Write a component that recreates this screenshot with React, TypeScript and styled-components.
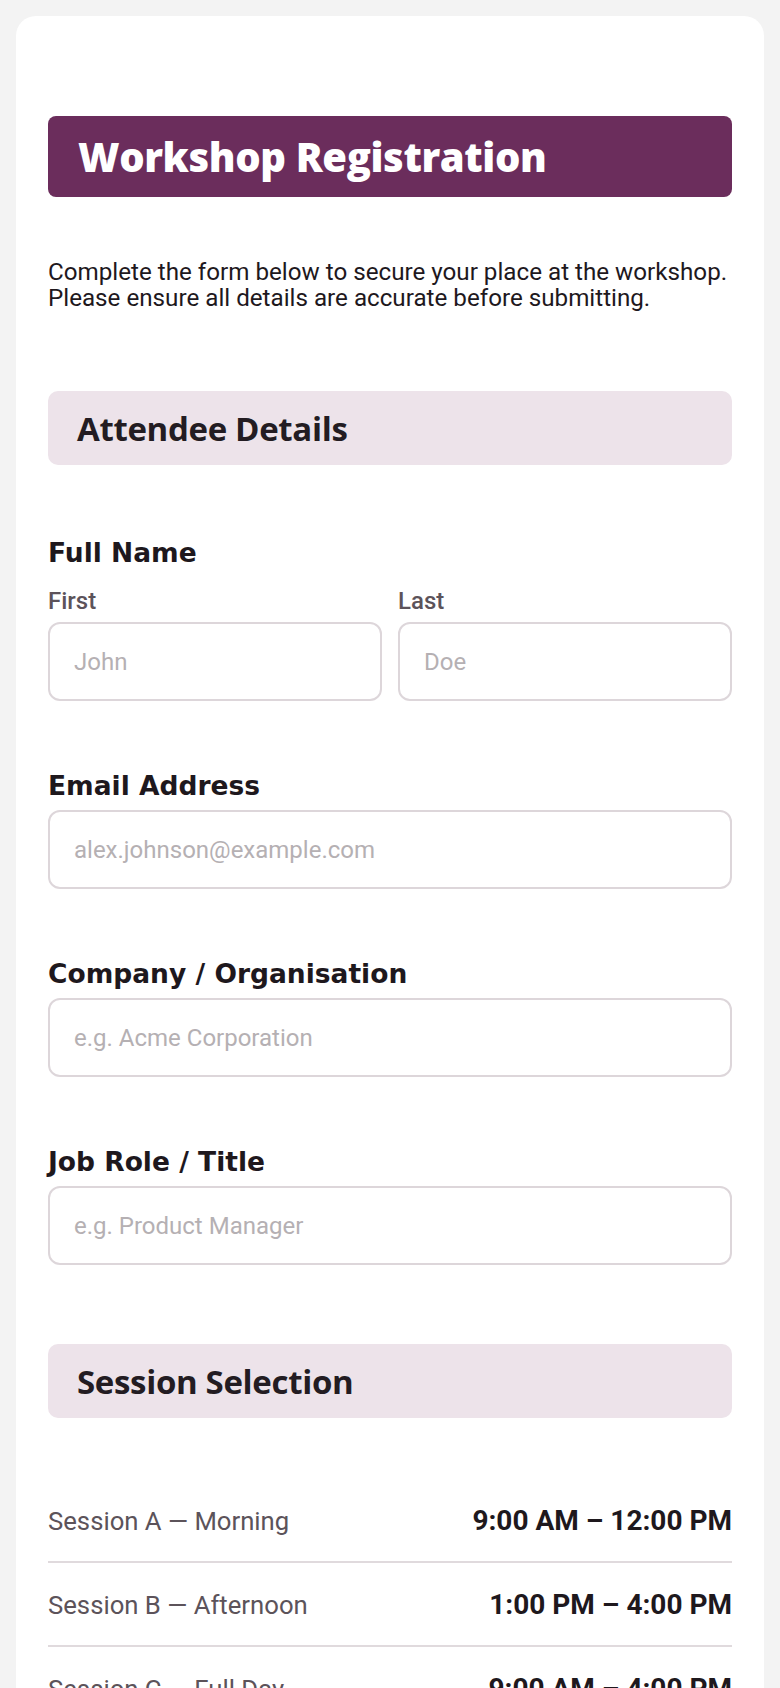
import React from 'react';
import styled, {createGlobalStyle} from "styled-components";

const GlobalStyle = createGlobalStyle`
  * {
    box-sizing: border-box;
  }

  body {
    margin: 0;
    background: #f3f3f3;
    font-family: Roboto, "Liberation Sans", sans-serif;
    color: #1e181d;
  }
`

const sessions = [
    {name: "Session A — Morning", time: "9:00 AM – 12:00 PM"},
    {name: "Session B — Afternoon", time: "1:00 PM – 4:00 PM"},
    {name: "Session C — Full Day", time: "9:00 AM – 4:00 PM"},
];

export default function App() {
    return (
        <>
            <GlobalStyle/>
            <Page>
                <Card>
                    <TitleBar>
                        <Title>Workshop Registration</Title>
                    </TitleBar>
                    <Intro>
                        Complete the form below to secure your place at the workshop.
                        Please ensure all details are accurate before submitting.
                    </Intro>

                    <SectionBar>
                        <SectionTitle>Attendee Details</SectionTitle>
                    </SectionBar>

                    <Field $first>
                        <Label>Full Name</Label>
                        <NameGrid>
                            <div>
                                <SubLabel>First</SubLabel>
                                <Input placeholder="John"/>
                            </div>
                            <div>
                                <SubLabel>Last</SubLabel>
                                <Input placeholder="Doe"/>
                            </div>
                        </NameGrid>
                    </Field>

                    <Field>
                        <Label>Email Address</Label>
                        <Input type="email" placeholder="alex.johnson@example.com"/>
                    </Field>

                    <Field>
                        <Label>Company / Organisation</Label>
                        <Input placeholder="e.g. Acme Corporation"/>
                    </Field>

                    <Field>
                        <Label>Job Role / Title</Label>
                        <Input placeholder="e.g. Product Manager"/>
                    </Field>

                    <SectionBar $spaced>
                        <SectionTitle>Session Selection</SectionTitle>
                    </SectionBar>

                    <SessionList>
                        {sessions.map(s => (
                            <SessionRow key={s.name}>
                                <SessionName>{s.name}</SessionName>
                                <SessionTime>{s.time}</SessionTime>
                            </SessionRow>
                        ))}
                    </SessionList>
                </Card>
            </Page>
        </>
    );
}

const Page = styled.div`
  padding: 16px;
`

const Card = styled.main`
  background: #ffffff;
  border-radius: 20px;
  padding: 100px 32px 48px;
`

const TitleBar = styled.header`
  display: flex;
  align-items: center;
  height: 81px;
  padding: 0 30px;
  background: #6b2d5c;
  border-radius: 8px;
`

const Title = styled.h1`
  margin: 0;
  color: #ffffff;
  font-family: "Open Sans", Inter, sans-serif;
  font-size: 40px;
  font-weight: 800;
  letter-spacing: -0.01em;
  line-height: 1;
`

const Intro = styled.p`
  margin: 62px 0 0;
  font-size: 24.2px;
  line-height: 26px;
  color: #1e181d;
`

const SectionBar = styled.div<{ $spaced?: boolean }>`
  display: flex;
  align-items: center;
  height: 74px;
  margin-top: ${p => p.$spaced ? "79px" : "80px"};
  padding: 0 29px;
  background: #ede3ea;
  border-radius: 10px;
`

const SectionTitle = styled.h2`
  margin: 0;
  color: #231c22;
  font-family: "Open Sans", Inter, sans-serif;
  font-size: 33px;
  font-weight: 700;
  letter-spacing: -0.01em;
  line-height: 1;
`

const Field = styled.div<{ $first?: boolean }>`
  display: flex;
  flex-direction: column;
  margin-top: ${p => p.$first ? "72px" : "69px"};
`

const Label = styled.label`
  font-family: "DejaVu Sans", sans-serif;
  font-size: 26.5px;
  font-weight: 700;
  line-height: 32px;
  color: #1e181d;
  margin-bottom: 8px;

  &:has(+ div) {
    margin-bottom: 19px;
  }
`

const NameGrid = styled.div`
  display: grid;
  grid-template-columns: 1fr 1fr;
  gap: 16px;
`

const SubLabel = styled.div`
  font-size: 24px;
  font-weight: 500;
  line-height: 26px;
  color: #5c535a;
  margin-bottom: 8px;
`

const Input = styled.input`
  display: block;
  width: 100%;
  height: 79px;
  padding: 0 24px;
  border: 2px solid #ddd6da;
  border-radius: 12px;
  background: #ffffff;
  font-family: Roboto, sans-serif;
  font-size: 24px;
  color: #1e181d;
  outline: none;

  &::placeholder {
    color: #b5b0b3;
  }
`

const SessionList = styled.div`
  margin-top: 61px;
`

const SessionRow = styled.div`
  display: flex;
  justify-content: space-between;
  align-items: baseline;
  padding: 27px 0 25px;
  border-bottom: 2px solid #e0dadd;
  line-height: 30px;
`

const SessionName = styled.span`
  font-size: 25.7px;
  color: #5c535a;
`

const SessionTime = styled.span`
  font-size: 28px;
  font-weight: 700;
  color: #1e181d;
`
